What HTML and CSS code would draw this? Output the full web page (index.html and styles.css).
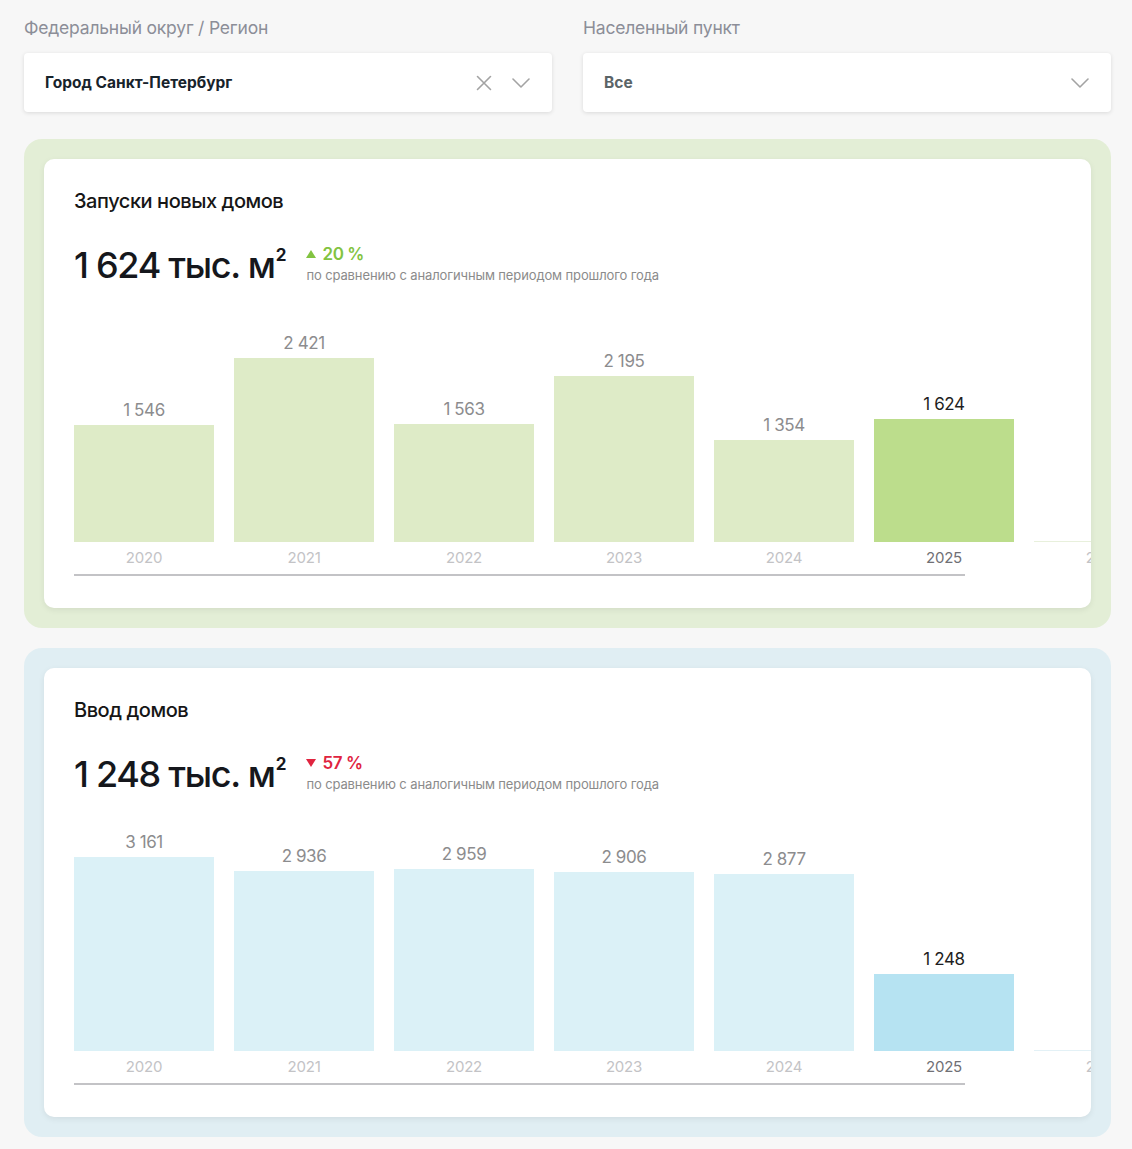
FILE: index.html
```html
<!DOCTYPE html>
<html lang="ru">
<head>
<meta charset="utf-8">
<title>Статистика</title>
<link rel="stylesheet" href="styles.css">
</head>
<body>
<div class="page">
  <div class="filters">
    <div class="filter">
      <div class="filter-label">Федеральный округ / Регион</div>
      <div class="select">
        <span class="select-value">Город Санкт-Петербург</span>
        <span class="select-icons">
          <svg class="ico-x" width="16" height="16" viewBox="0 0 16 16"><path d="M1.5 1.5L14.5 14.5M14.5 1.5L1.5 14.5" stroke="#a3a3a3" stroke-width="1.6" fill="none" stroke-linecap="round"/></svg>
          <svg class="ico-chev" width="18" height="10" viewBox="0 0 18 10"><path d="M1 1L9 9L17 1" stroke="#a3a3a3" stroke-width="1.6" fill="none" stroke-linecap="round" stroke-linejoin="round"/></svg>
        </span>
      </div>
    </div>
    <div class="filter">
      <div class="filter-label">Населенный пункт</div>
      <div class="select">
        <span class="select-value muted">Все</span>
        <span class="select-icons">
          <svg class="ico-chev" width="18" height="10" viewBox="0 0 18 10"><path d="M1 1L9 9L17 1" stroke="#a3a3a3" stroke-width="1.6" fill="none" stroke-linecap="round" stroke-linejoin="round"/></svg>
        </span>
      </div>
    </div>
  </div>

  <section class="panel panel-green">
    <div class="card">
      <h2 class="card-title">Запуски новых домов</h2>
      <div class="summary">
        <div class="big-number">1 624 тыс. м<sup class="sq">2</sup></div>
        <div class="delta">
          <div class="delta-value up">
            <svg class="tri" width="10" height="8" viewBox="0 0 10 8"><polygon points="5,0 10,8 0,8" fill="#82c341"/></svg>
            20 %
          </div>
          <div class="delta-note">по сравнению с аналогичным периодом прошлого года</div>
        </div>
      </div>
      <div class="chart green">
        <div class="plot">
          <div class="col"><div class="val">1 546</div><div class="bar" style="height:117px"></div></div>
          <div class="col"><div class="val">2 421</div><div class="bar" style="height:184px"></div></div>
          <div class="col"><div class="val">1 563</div><div class="bar" style="height:118px"></div></div>
          <div class="col"><div class="val">2 195</div><div class="bar" style="height:166px"></div></div>
          <div class="col"><div class="val">1 354</div><div class="bar" style="height:102px"></div></div>
          <div class="col active"><div class="val">1 624</div><div class="bar" style="height:123px"></div></div>
          <div class="col empty"><div class="bar" style="height:1px"></div></div>
        </div>
        <div class="years">
          <div class="year">2020</div>
          <div class="year">2021</div>
          <div class="year">2022</div>
          <div class="year">2023</div>
          <div class="year">2024</div>
          <div class="year active">2025</div>
          <div class="year">2026</div>
        </div>
        <div class="axis"></div>
      </div>
    </div>
  </section>

  <section class="panel panel-blue">
    <div class="card">
      <h2 class="card-title">Ввод домов</h2>
      <div class="summary">
        <div class="big-number">1 248 тыс. м<sup class="sq">2</sup></div>
        <div class="delta">
          <div class="delta-value down">
            <svg class="tri" width="10" height="8" viewBox="0 0 10 8"><polygon points="0,0 10,0 5,8" fill="#e0243f"/></svg>
            57 %
          </div>
          <div class="delta-note">по сравнению с аналогичным периодом прошлого года</div>
        </div>
      </div>
      <div class="chart blue">
        <div class="plot">
          <div class="col"><div class="val">3 161</div><div class="bar" style="height:194px"></div></div>
          <div class="col"><div class="val">2 936</div><div class="bar" style="height:180px"></div></div>
          <div class="col"><div class="val">2 959</div><div class="bar" style="height:182px"></div></div>
          <div class="col"><div class="val">2 906</div><div class="bar" style="height:179px"></div></div>
          <div class="col"><div class="val">2 877</div><div class="bar" style="height:177px"></div></div>
          <div class="col active"><div class="val">1 248</div><div class="bar" style="height:77px"></div></div>
          <div class="col empty"><div class="bar" style="height:1px"></div></div>
        </div>
        <div class="years">
          <div class="year">2020</div>
          <div class="year">2021</div>
          <div class="year">2022</div>
          <div class="year">2023</div>
          <div class="year">2024</div>
          <div class="year active">2025</div>
          <div class="year">2026</div>
        </div>
        <div class="axis"></div>
      </div>
    </div>
  </section>
</div>
</body>
</html>
```

FILE: styles.css
```css
* { box-sizing: border-box; }

html, body {
  margin: 0;
  padding: 0;
  background: #f7f7f7;
  font-family: Inter, "Noto Sans", "DejaVu Sans", sans-serif;
  color: #1c1c1e;
}

.page {
  padding: 17px 21px 12px 24px;
}

/* Filters */
.filters {
  display: grid;
  grid-template-columns: 1fr 1fr;
  column-gap: 31px;
}

.filter-label {
  font-size: 17.5px;
  line-height: 22px;
  color: #8c8e98;
  letter-spacing: -0.2px;
}

.select {
  margin-top: 14px;
  height: 59px;
  background: #fff;
  border-radius: 4px;
  box-shadow: 0 1px 4px rgba(0, 0, 0, 0.12);
  display: flex;
  align-items: center;
  justify-content: space-between;
  padding: 0 22px 0 21px;
}

.select-value {
  font-size: 15.5px;
  font-weight: 700;
  color: #17232b;
  letter-spacing: 0;
}

.select-value.muted {
  color: #5b6467;
}

.select-icons {
  display: flex;
  align-items: center;
  gap: 20px;
}

.select-icons svg { display: block; }

/* Panels */
.panel {
  margin-top: 27px;
  border-radius: 18px;
  padding: 20px;
}

.panel-blue { margin-top: 20px; }

.panel-green { background: #e3eed6; }
.panel-blue { background: #e0eef3; }

.card {
  background: #fff;
  border-radius: 10px;
  box-shadow: 0 2px 6px rgba(0, 0, 0, 0.07);
  padding: 30px 30px 32px 30px;
  overflow: hidden;
}

.card-title {
  margin: 0;
  font-size: 20px;
  line-height: 24px;
  font-weight: 500;
  color: #161616;
  letter-spacing: -0.45px;
}

.summary {
  margin-top: 30px;
  display: flex;
  align-items: flex-start;
  gap: 20px;
  height: 44px;
}

.big-number {
  font-size: 36px;
  line-height: 44px;
  font-weight: 500;
  color: #15171c;
  letter-spacing: -1.3px;
  white-space: nowrap;
}

.sq {
  font-size: 17px;
  font-weight: 700;
  vertical-align: 0;
  position: relative;
  top: -17px;
  margin-left: 1px;
  line-height: 0;
  letter-spacing: 0;
}

.delta {
  display: flex;
  flex-direction: column;
  gap: 2px;
}

.delta-value {
  display: flex;
  align-items: center;
  gap: 6px;
  font-size: 17px;
  line-height: 22px;
  font-weight: 600;
  letter-spacing: -0.4px;
}

.delta-value.up { color: #82c341; }
.delta-value.down { color: #e0243f; }

.tri { display: block; }

.delta-note {
  font-size: 13px;
  line-height: 16px;
  color: #8b8b8b;
  letter-spacing: -0.12px;
  white-space: nowrap;
}

/* Chart */
.chart {
  margin-top: 25px;
}

.plot {
  height: 230px;
  display: flex;
  align-items: flex-end;
  gap: 20px;
}

.col {
  flex: 0 0 140px;
  display: flex;
  flex-direction: column;
  align-items: stretch;
}

.val {
  text-align: center;
  font-size: 17px;
  line-height: 20px;
  margin-bottom: 5px;
  color: #8c8c8e;
  letter-spacing: -0.4px;
}

.col.active .val { color: #1e1e22; }

.green .bar { background: #deebc7; }
.green .col.active .bar { background: #bcdd8c; }
.green .col.empty .bar { background: #e8f0dc; }

.blue .bar { background: #dbf1f7; }
.blue .col.active .bar { background: #b6e3f2; }
.blue .col.empty .bar { background: #e3f1f6; }

.years {
  margin-top: 6px;
  display: flex;
  gap: 20px;
}

.year {
  flex: 0 0 140px;
  text-align: center;
  font-size: 15px;
  line-height: 20px;
  color: #c3c3c6;
  letter-spacing: -0.2px;
}

.year.active { color: #707075; }

.axis {
  margin-top: 6px;
  width: 891px;
  height: 2px;
  background: #c3c3c6;
}
```
